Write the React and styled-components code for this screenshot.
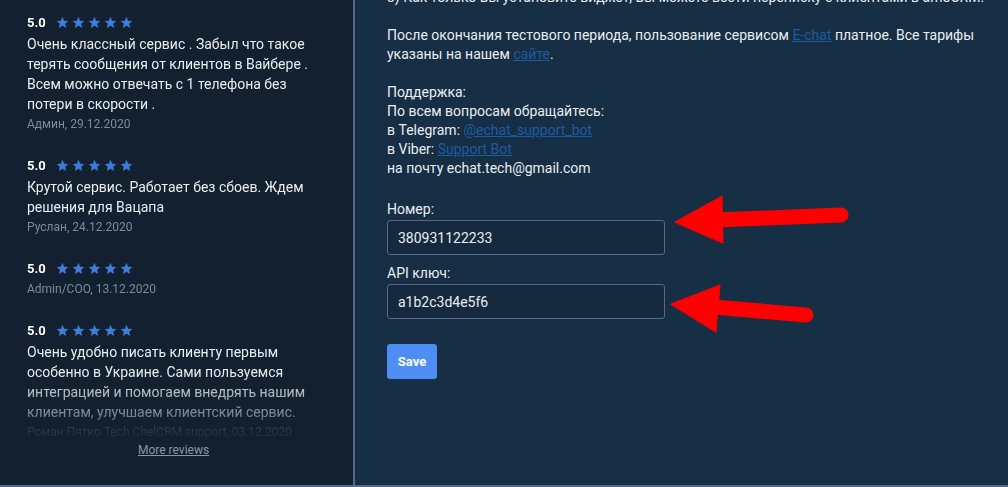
import React from "react";
import styled, { createGlobalStyle } from "styled-components";

const GlobalStyle = createGlobalStyle`
  html, body {
    margin: 0;
    padding: 0;
    background: #172f44;
  }
  body {
    font-family: Roboto, "Liberation Sans", sans-serif;
  }
`;

const reviews = [
  {
    id: 1,
    text: "Очень классный сервис . Забыл что такое терять сообщения от клиентов в Вайбере . Всем можно отвечать с 1 телефона без потери в скорости .",
    author: "Админ, 29.12.2020",
  },
  {
    id: 2,
    text: "Крутой сервис. Работает без сбоев. Ждем решения для Вацапа",
    author: "Руслан, 24.12.2020",
  },
  { id: 3, text: "", author: "Admin/COO, 13.12.2020" },
  {
    id: 4,
    text: "Очень удобно писать клиенту первым особенно в Украине. Сами пользуемся интеграцией и помогаем внедрять нашим клиентам, улучшаем клиентский сервис.",
    author: "Роман Пятко Tech ChelCRM support, 03.12.2020",
  },
];

function Star() {
  return (
    <svg width="13" height="13" viewBox="0 0 24 24">
      <path
        fill="#3f7bd9"
        d="M12 1.5l3.1 7.1 7.7.7-5.8 5.1 1.7 7.6L12 18l-6.7 4 1.7-7.6-5.8-5.1 7.7-.7z"
      />
    </svg>
  );
}

export default function App() {
  return (
    <Page>
      <GlobalStyle />
      <Sidebar>
        <ReviewList>
          {reviews.map((r) => (
            <Review key={r.id}>
              <RatingRow>
                <Score>5.0</Score>
                <Stars>
                  <Star />
                  <Star />
                  <Star />
                  <Star />
                  <Star />
                </Stars>
              </RatingRow>
              {r.text ? <ReviewText>{r.text}</ReviewText> : null}
              <Author>{r.author}</Author>
            </Review>
          ))}
        </ReviewList>
        <MoreLink href="#">More reviews</MoreLink>
      </Sidebar>

      <Main>
        <Content>
          <Para $nowrap>
            3) Как только Вы установите виджет, Вы можете вести переписку с клиентами в amoCRM.
          </Para>
          <Para>
            После окончания тестового периода, пользование сервисом <Link href="#">E-chat</Link>{" "}
            платное. Все тарифы указаны на нашем <Link href="#">сайте</Link>.
          </Para>
          <Para>
            Поддержка:
            <br />
            По всем вопросам обращайтесь:
            <br />
            в Telegram: <Link href="#">@echat_support_bot</Link>
            <br />
            в Viber: <Link href="#">Support Bot</Link>
            <br />
            на почту echat.tech@gmail.com
          </Para>

          <Form>
            <Label>Номер:</Label>
            <Input defaultValue="380931122233" />
            <Label $top="9px">API ключ:</Label>
            <Input defaultValue="a1b2c3d4e5f6" />
            <SaveButton type="button">Save</SaveButton>
          </Form>
        </Content>

        <Arrows width="1008" height="487" viewBox="0 0 1008 487">
          <g fill="#ff0000" stroke="#ff0000" strokeLinecap="round">
            <line x1="716" y1="220" x2="841" y2="215" strokeWidth="15" />
            <polygon points="675,222 722,196 723,243" strokeWidth="1" strokeLinejoin="round" />
            <line x1="714" y1="307" x2="806" y2="315" strokeWidth="15" />
            <polygon points="671,304 720,285 716,332" strokeWidth="1" strokeLinejoin="round" />
          </g>
        </Arrows>
      </Main>
    </Page>
  );
}

const Page = styled.div`
  display: flex;
  width: 1008px;
  height: 487px;
  box-sizing: border-box;
  border-bottom: 2px solid #56678a;
  overflow: hidden;
  background: #172f44;
`;

const Sidebar = styled.div`
  width: 355px;
  flex-shrink: 0;
  box-sizing: border-box;
  background: #12202f;
  border-right: 2px solid #56678a;
  padding: 11px 0 0 27px;
  display: flex;
  flex-direction: column;
`;

const ReviewList = styled.div`
  width: 300px;
  display: flex;
  flex-direction: column;
  gap: 20px;
  -webkit-mask-image: linear-gradient(to bottom, #000 0, #000 362px, rgba(0,0,0,0.5) 402px, rgba(0,0,0,0.12) 426px);
  mask-image: linear-gradient(to bottom, #000 0, #000 362px, rgba(0,0,0,0.5) 402px, rgba(0,0,0,0.12) 426px);
`;

const Review = styled.div`
  display: flex;
  flex-direction: column;
`;

const RatingRow = styled.div`
  display: flex;
  align-items: center;
  gap: 10px;
  height: 22px;
`;

const Score = styled.span`
  color: #ffffff;
  font-weight: 700;
  font-size: 13px;
`;

const Stars = styled.span`
  display: flex;
  gap: 3px;
`;

const ReviewText = styled.div`
  color: #e8edf2;
  font-size: 14px;
  line-height: 20px;
  margin-top: 1px;
`;

const Author = styled.div`
  color: #7d8a99;
  font-size: 12px;
  line-height: 20px;
`;

const MoreLink = styled.a`
  align-self: flex-start;
  margin: 1px 0 0 111px;
  color: #8a96a5;
  font-size: 12px;
  line-height: 14px;
  text-decoration: underline;
`;

const Main = styled.div`
  position: relative;
  flex: 1;
  background: #172f44;
`;

const Content = styled.div`
  margin-top: -12px;
  padding-left: 32px;
  width: 592px;
  color: #e8edf2;
  font-size: 14px;
  line-height: 19px;
`;

const Para = styled.p`
  margin: 0 0 19px;
  white-space: ${(p) => (p.$nowrap ? "nowrap" : "normal")};
`;

const Link = styled.a`
  color: #1c5ba2;
  text-decoration: underline;
`;

const Form = styled.div`
  display: flex;
  flex-direction: column;
  align-items: flex-start;
  margin-top: 22px;
`;

const Label = styled.label`
  font-size: 14px;
  line-height: 19px;
  color: #e8edf2;
  margin-top: ${(p) => p.$top || "0"};
`;

const Input = styled.input`
  box-sizing: border-box;
  width: 278px;
  height: 35px;
  margin-top: 1px;
  padding: 0 10px;
  background: #152a3e;
  border: 1px solid #5a6882;
  border-radius: 3px;
  color: #e8edf2;
  font-family: Roboto, "Liberation Sans", sans-serif;
  font-size: 14px;
  outline: none;
`;

const SaveButton = styled.button`
  margin-top: 25px;
  width: 50px;
  height: 35px;
  border: none;
  border-radius: 3px;
  background: #4d8ef5;
  color: #ffffff;
  font-family: Roboto, "Liberation Sans", sans-serif;
  font-size: 13px;
  font-weight: 700;
  cursor: pointer;
`;

const Arrows = styled.svg`
  position: absolute;
  top: 0;
  left: -355px;
  pointer-events: none;
`;
